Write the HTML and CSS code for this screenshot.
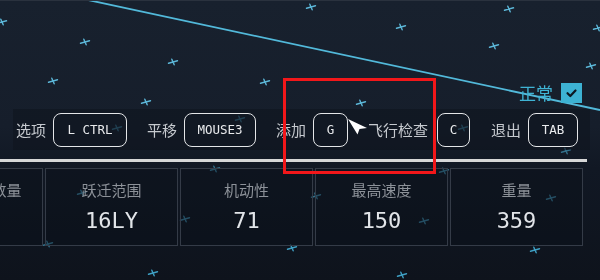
FILE: index.html
```html
<!DOCTYPE html>
<html>
<head>
<meta charset="utf-8">
<link rel="stylesheet" href="styles.css">
</head>
<body>
<div class="scene">
  <svg class="sky" width="600" height="280" viewBox="0 0 600 280">
    <defs>
      <g id="s"><path d="M-4.5 1.2L4.5 -1.2M-1.2 -2.8L1.2 2.8"/></g>
    </defs>
    <line class="beam" x1="88" y1="-1" x2="600" y2="109"/>
    <g class="stars">
      <use href="#s" x="2" y="21"/>
      <use href="#s" x="85" y="41"/>
      <use href="#s" x="173" y="61"/>
      <use href="#s" x="53" y="80"/>
      <use href="#s" x="265" y="81"/>
      <use href="#s" x="146" y="101"/>
      <use href="#s" x="311" y="6"/>
      <use href="#s" x="509" y="8"/>
      <use href="#s" x="401" y="26"/>
      <use href="#s" x="494" y="45"/>
      <use href="#s" x="598" y="27"/>
      <use href="#s" x="591" y="65"/>
      <use href="#s" x="361" y="102"/>
    </g>
    <g class="stars dim">
      <use href="#s" x="117" y="127"/>
      <use href="#s" x="240" y="118"/>
      <use href="#s" x="463" y="127"/>
      <use href="#s" x="566" y="150"/>
      <use href="#s" x="215" y="168"/>
      <use href="#s" x="82" y="192"/>
      <use href="#s" x="185" y="218"/>
      <use href="#s" x="48" y="243"/>
      <use href="#s" x="444" y="170"/>
      <use href="#s" x="316" y="195"/>
      <use href="#s" x="424" y="220"/>
      <use href="#s" x="551" y="197"/>
    </g>
    <g class="stars low">
      <use href="#s" x="292" y="247"/>
      <use href="#s" x="153" y="272"/>
      <use href="#s" x="535" y="249"/>
      <use href="#s" x="402" y="274"/>
    </g>
  </svg>

  <div class="hud">
    <div class="status">
      <span class="status-label">正常</span>
      <span class="check">
        <svg width="21" height="20" viewBox="0 0 21 20"><path d="M6.5 10.2L9.3 13L14.5 7.5" fill="none" stroke="#0d1822" stroke-width="2.2" stroke-linecap="round" stroke-linejoin="round"/></svg>
      </span>
    </div>

    <div class="keybar">
      <span class="kl">选项</span><span class="key k74">L CTRL</span>
      <span class="kl">平移</span><span class="key k72">MOUSE3</span>
      <span class="kl">添加</span><span class="key k35">G</span>
      <span class="kl kl-wide">飞行检查</span><span class="key k33 key-c">C</span>
      <span class="kl">退出</span><span class="key k50">TAB</span>
    </div>

    <div class="sep"></div>

    <div class="stats">
      <div class="cell"><div class="lbl">最大船员数量</div><div class="val">4</div></div>
      <div class="cell"><div class="lbl">跃迁范围</div><div class="val">16LY</div></div>
      <div class="cell"><div class="lbl">机动性</div><div class="val">71</div></div>
      <div class="cell"><div class="lbl">最高速度</div><div class="val">150</div></div>
      <div class="cell"><div class="lbl">重量</div><div class="val">359</div></div>
    </div>
  </div>

  <svg class="cursor" width="24" height="20" viewBox="0 0 24 20">
    <path d="M2 2L21 11L13.5 12L11.5 17.5Z" fill="#ffffff"/>
  </svg>
  <div class="highlight"></div>
</div>
</body>
</html>
```

FILE: styles.css
```css
* { box-sizing: border-box; }

html, body {
  margin: 0;
  padding: 0;
  background: #121925;
}

.scene {
  position: relative;
  width: 600px;
  height: 280px;
  overflow: hidden;
  background: linear-gradient(180deg, #18212e 0%, #161e2b 45%, #111824 60%, #0e131c 100%);
  border-top: 1px solid #2a323e;
  font-family: "Noto Sans CJK SC", "Noto Sans", sans-serif;
}

.sky {
  position: absolute;
  left: 0;
  top: 0;
}

.beam {
  stroke: #52b9da;
  stroke-width: 1.8;
}

.stars {
  fill: none;
  stroke: #5cb7d8;
  stroke-width: 1.4;
  stroke-linecap: round;
}

.stars.dim { stroke: #3f8eae; opacity: 0.75; }
.stars.low { stroke: #3e9fc3; }

.hud {
  position: relative;
  padding-top: 82px;
}

.status {
  display: flex;
  justify-content: flex-end;
  align-items: center;
  height: 20px;
  padding-right: 18px;
  gap: 8px;
}

.status-label {
  color: #3fb3d4;
  font-size: 17px;
  line-height: 20px;
}

.check {
  display: block;
  width: 21px;
  height: 20px;
  background: #3db2d3;
}

.check svg { display: block; }

.keybar {
  display: flex;
  align-items: center;
  margin-top: 6px;
  margin-left: 13px;
  width: 577px;
  height: 41px;
  padding-left: 3px;
  background: rgba(14, 20, 30, 0.55);
}

.kl {
  color: #c6cacf;
  font-size: 15px;
  line-height: 20px;
  margin-right: 7px;
  white-space: nowrap;
}

.kl-wide { margin-right: 9px; }

.key {
  display: flex;
  align-items: center;
  justify-content: center;
  height: 34px;
  border: 1.5px solid #e4e6e8;
  border-radius: 8px;
  margin-right: 20px;
  color: #e8eaec;
  font-family: "DejaVu Sans Mono", "Liberation Mono", monospace;
  font-size: 12.5px;
  white-space: pre;
}

.key-c { margin-right: 21px; }

.k74 { width: 74px; }
.k72 { width: 72px; }
.k35 { width: 35px; }
.k33 { width: 33px; }
.k50 { width: 50px; margin-right: 0; }

.sep {
  margin-top: 9px;
  width: 587px;
  height: 3px;
  background: #d6d7d8;
}

.stats {
  display: grid;
  grid-template-columns: repeat(5, 133px);
  gap: 2px;
  margin-top: 6px;
  margin-left: -90px;
}

.cell {
  height: 78px;
  border: 1px solid #343b47;
  background: rgba(10, 14, 22, 0.35);
  text-align: center;
  padding-top: 11px;
}

.lbl {
  color: #8d9299;
  font-size: 15px;
  line-height: 20px;
}

.val {
  margin-top: 8px;
  color: #e2e5e9;
  font-family: "DejaVu Sans Mono", "Liberation Mono", monospace;
  font-size: 22px;
  line-height: 26px;
}

.cursor {
  position: absolute;
  left: 346px;
  top: 116px;
}

.highlight {
  position: absolute;
  left: 283px;
  top: 77px;
  width: 153px;
  height: 96px;
  border: 3px solid #f2171a;
}
```
